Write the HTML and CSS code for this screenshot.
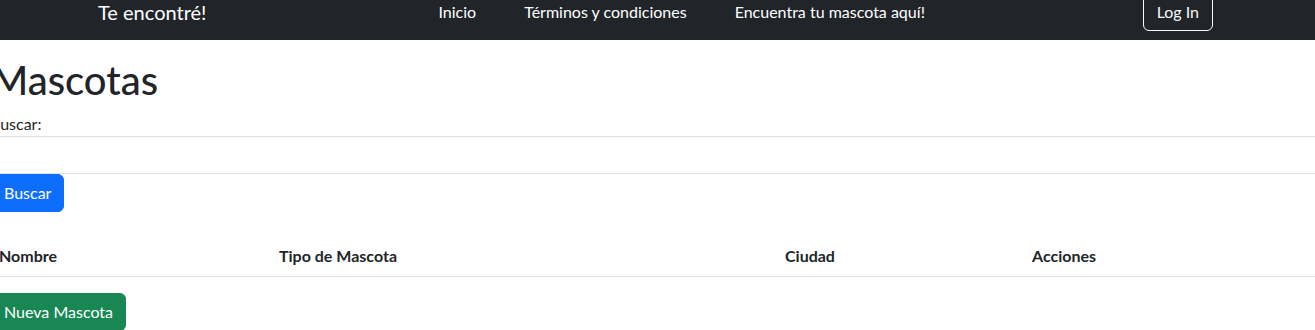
FILE: index.html
```html
<!DOCTYPE html>
<html lang="es">
<head>
<meta charset="utf-8">
<title>Te encontré!</title>
<link rel="stylesheet" href="styles.css">
</head>
<body>
<header class="navbar">
  <div class="nav-inner">
    <a class="brand" href="#">Te encontré!</a>
    <ul class="nav-links">
      <li><a href="#">Inicio</a></li>
      <li><a href="#">Términos y condiciones</a></li>
      <li><a href="#">Encuentra tu mascota aquí!</a></li>
    </ul>
    <button class="btn btn-outline-light">Log In</button>
  </div>
</header>
<main class="content">
  <h1 class="title">Mascotas</h1>
  <form class="search">
    <label class="search-label" for="q">Buscar:</label>
    <input class="search-input" id="q" type="text">
    <button class="btn btn-primary" type="button">Buscar</button>
  </form>
  <table class="table">
    <thead>
      <tr>
        <th class="c1">Nombre</th>
        <th class="c2">Tipo de Mascota</th>
        <th class="c3">Ciudad</th>
        <th class="c4">Acciones</th>
      </tr>
    </thead>
  </table>
  <button class="btn btn-success" type="button">Nueva Mascota</button>
</main>
</body>
</html>
```
FILE: styles.css
```css
* { box-sizing: border-box; }
html, body { margin: 0; padding: 0; overflow: hidden; }
body {
  font-family: "Lato", "Open Sans", sans-serif;
  font-size: 16px;
  line-height: 1.5;
  color: #212529;
  background: #fff;
  width: 1315px;
  height: 330px;
}
.navbar {
  background: #212529;
  margin-top: -16px;
  padding: 8px 0;
}
.nav-inner {
  display: flex;
  align-items: center;
  height: 40px;
  padding-left: 98px;
}
.brand {
  color: #fff;
  text-decoration: none;
  font-size: 20px;
  line-height: 30px;
}
.nav-links {
  display: flex;
  list-style: none;
  margin: 0 0 0 232px;
  padding: 0;
  gap: 48px;
}
.nav-links a {
  color: #fff;
  text-decoration: none;
  line-height: 24px;
}
.btn {
  font-family: inherit;
  font-size: 16px;
  line-height: 24px;
  padding: 6px 12px;
  border: 1px solid transparent;
  border-radius: 6px;
  cursor: pointer;
  display: inline-block;
}
.btn-outline-light {
  margin-left: auto;
  margin-right: 102px;
  padding: 6px 13px;
  background: transparent;
  color: #f8f9fa;
  border-color: #f8f9fa;
}
.content {
  margin-left: -10px;
  width: 1340px;
  padding-top: 16px;
}
.title {
  font-size: 40px;
  font-weight: 500;
  line-height: 1.2;
  margin: 0 0 8px 1px;
}
.search { display: flex; flex-direction: column; align-items: flex-start; }
.search-label { display: block; line-height: 24px; }
.search-input {
  display: block;
  width: 100%;
  height: 38px;
  border: 1px solid #dee2e6;
  padding: 6px 12px;
  font: inherit;
}
.btn-primary { background: #0d6efd; border-color: #0d6efd; color: #fff; margin-left: 1px; }
.btn-success { background: #198754; border-color: #198754; color: #fff; margin-left: 1px; }
.table {
  width: 100%;
  border-collapse: collapse;
  margin-top: 24px;
  margin-bottom: 16px;
  table-layout: fixed;
}
.table th {
  text-align: left;
  font-weight: 700;
  padding: 8px 8px 8px 9px;
  line-height: 24px;
  border-bottom: 1px solid #dee2e6;
}
.c1 { width: 280px; }
.c2 { width: 506px; }
.c3 { width: 247px; }
```
